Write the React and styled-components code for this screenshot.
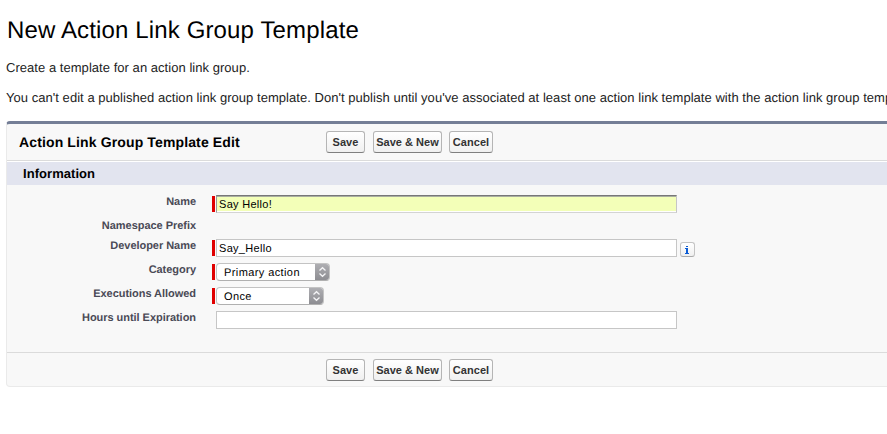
import React from "react";
import styled, { createGlobalStyle } from "styled-components";

const GlobalStyle = createGlobalStyle`
  * { box-sizing: border-box; }
  html, body { margin: 0; background: #fff; overflow: hidden; }
  body {
    font-family: "Liberation Sans", Arial, sans-serif;
    color: #222;
    text-rendering: geometricPrecision;
  }
`;

const Page = styled.main`
  width: 887px;
  height: 434px;
  overflow: hidden;
  padding: 16px 0 0 6px;
`;

const Title = styled.h1`
  margin: 0 0 -1px 1px;
  font-size: 24px;
  line-height: 30px;
  font-weight: 400;
  letter-spacing: 0.14px;
  color: #000;
  white-space: nowrap;
`;

const Intro = styled.p`
  margin: 0;
  padding-top: 15px;
  font-size: 13px;
  line-height: 15px;
  letter-spacing: 0.04px;
  white-space: nowrap;
  color: #222;
`;

const Panel = styled.form`
  margin-top: 16px;
  width: 900px;
  height: 266px;
  display: flex;
  flex-direction: column;
  background: #f8f8f8;
  border: 1px solid #eaeaea;
  border-top: 3px solid #747e96;
  border-radius: 4px;
  overflow: hidden;
`;

const ActionBar = styled.div`
  display: flex;
  align-items: center;
  flex: none;
  height: ${(p) => (p.$footer ? "34px" : "37px")};
  padding-top: ${(p) => (p.$footer ? "1px" : "0")};
  border: 0 solid #dbdbdb;
  border-width: ${(p) => (p.$footer ? "1px 0 0" : "0 0 1px")};
`;

const PanelTitle = styled.h2`
  width: 319px;
  margin: 0;
  padding-left: 12px;
  font-size: 14px;
  line-height: 18px;
  font-weight: 700;
  letter-spacing: 0.13px;
  color: #000;
  white-space: nowrap;
`;

const Buttons = styled.div`
  display: flex;
`;

const Button = styled.button`
  width: ${(p) => p.$width}px;
  height: 22px;
  margin: 0 ${(p) => p.$gap || 0}px 0 0;
  padding: 1px 0 0;
  border: 1px solid #b5b5b5;
  border-bottom-color: #7f7f7f;
  border-radius: 3px;
  background: linear-gradient(#fff, #f0f0f0);
  font: 700 11px/19px "Liberation Sans", Arial, sans-serif;
  letter-spacing: 0.03px;
  color: #333;
  white-space: nowrap;
`;

const SectionTitle = styled.h3`
  flex: none;
  height: 24px;
  margin: 0;
  padding-left: 16px;
  border-top: 1px solid #fff;
  background: #e2e4ef;
  font-size: 13px;
  line-height: 23px;
  font-weight: 700;
  letter-spacing: 0.05px;
  color: #000;
`;

const Fields = styled.div`
  flex: 1;
  padding-top: 8px;
`;

const Row = styled.div`
  display: flex;
  height: ${(p) => (p.$short ? 20 : 24)}px;
  padding-top: 2px;
`;

const Label = styled.label`
  width: 189px;
  margin: 1px 16px 0 0;
  text-align: right;
  font-size: 11px;
  line-height: 13px;
  font-weight: 700;
  letter-spacing: -0.04px;
  color: #4a4a56;
  white-space: nowrap;
`;

const Required = styled.span`
  width: 3px;
  height: 16px;
  margin: 1px 1px 0 0;
  background: ${(p) => (p.$on ? "#e00000" : "transparent")};
`;

const TextInput = styled.input`
  width: 461px;
  height: 18px;
  padding: 0 2px;
  border: 1px solid #c6c6c6;
  border-radius: 0;
  outline: none;
  background: #fff;
  font: 11px/16px "Liberation Sans", Arial, sans-serif;
  letter-spacing: 0.3px;
  color: #000;
  ${(p) => p.$highlight && `
    background: #f3ffb8;
    border-color: #777 #c6c6c6 #d4d4d4 #999;
    box-shadow: inset 0 1px #a9aea0, inset 0 -1px #fff;
  `}
`;

const Select = styled.div`
  display: flex;
  width: ${(p) => p.$width}px;
  height: 18px;
  border: 1px solid #c3c3c3;
  border-bottom-color: #b0b0b0;
  border-radius: 4px;
  background: #fff;
  overflow: hidden;
  font-size: 11px;
  line-height: 18px;
  letter-spacing: 0.4px;
  color: #000;
`;

const SelectValue = styled.span`
  flex: 1;
  padding-left: 7px;
  white-space: nowrap;
`;

const Stepper = styled.span`
  display: flex;
  align-items: center;
  justify-content: center;
  width: 15px;
  height: 18px;
  margin: -1px -1px -1px 0;
  background: linear-gradient(#b0b0b4, #8b8b90);
`;

const InfoButton = styled.button`
  display: flex;
  align-items: center;
  justify-content: center;
  width: 15px;
  height: 15px;
  margin: 3px 0 0 3px;
  padding: 0;
  border: 1px solid #c4c4c4;
  border-bottom-color: #aaa;
  border-radius: 3px;
  background: linear-gradient(#fff, #f0f0f0);
`;

function Actions() {
  return (
    <Buttons>
      <Button type="button" $width={39} $gap={8}>Save</Button>
      <Button type="button" $width={69} $gap={7}>Save &amp; New</Button>
      <Button type="button" $width={44}>Cancel</Button>
    </Buttons>
  );
}

function SelectBox({ width, value }) {
  return (
    <Select $width={width}>
      <SelectValue>{value}</SelectValue>
      <Stepper>
        <svg width="9" height="12" viewBox="0 0 9 12" fill="none" stroke="#f4f4f6" strokeWidth="1.3">
          <path d="M1.5 4.5 4.5 1.7 7.5 4.5M1.5 7.5 4.5 10.3 7.5 7.5" />
        </svg>
      </Stepper>
    </Select>
  );
}

function Field({ label, required, short, children }) {
  return (
    <Row $short={short}>
      <Label>{label}</Label>
      <Required $on={required} />
      {children}
    </Row>
  );
}

export default function App() {
  return (
    <>
      <GlobalStyle />
      <Page>
        <Title>New Action Link Group Template</Title>
        <Intro>Create a template for an action link group.</Intro>
        <Intro>
          You can't edit a published action link group template. Don't publish until you've associated at
          least one action link template with the action link group template.
        </Intro>
        <Panel>
          <ActionBar>
            <PanelTitle>Action Link Group Template Edit</PanelTitle>
            <Actions />
          </ActionBar>
          <SectionTitle>Information</SectionTitle>
          <Fields>
            <Field label="Name" required>
              <TextInput defaultValue="Say Hello!" $highlight />
            </Field>
            <Field label="Namespace Prefix" short />
            <Field label="Developer Name" required>
              <TextInput defaultValue="Say_Hello" />
              <InfoButton type="button" aria-label="Information">
                <svg width="5" height="8" viewBox="0 0 5 8" fill="#0b5cd5" shapeRendering="crispEdges">
                  <path d="M1 0h2v1H1zM0 2h3v5h1v1H0V7h1V3H0z" />
                </svg>
              </InfoButton>
            </Field>
            <Field label="Category" required>
              <SelectBox width={114} value="Primary action" />
            </Field>
            <Field label="Executions Allowed" required>
              <SelectBox width={108} value="Once" />
            </Field>
            <Field label="Hours until Expiration">
              <TextInput defaultValue="" />
            </Field>
          </Fields>
          <ActionBar $footer>
            <PanelTitle as="div" />
            <Actions />
          </ActionBar>
        </Panel>
      </Page>
    </>
  );
}
